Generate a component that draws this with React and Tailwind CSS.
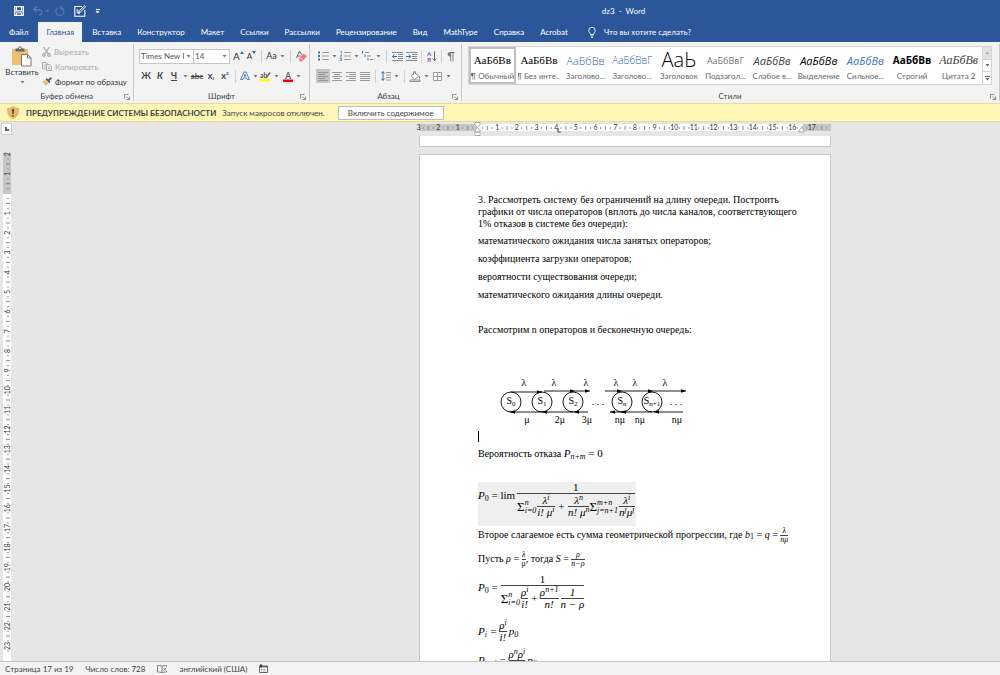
import React from "react";

const tabs = [
  "Файл",
  "Главная",
  "Вставка",
  "Конструктор",
  "Макет",
  "Ссылки",
  "Рассылки",
  "Рецензирование",
  "Вид",
  "MathType",
  "Справка",
  "Acrobat",
];

const styles = [
  { name: "¶ Обычный", sample: "АаБбВв", look: "font-['Liberation_Serif',serif] text-[11px] text-black", active: true },
  { name: "¶ Без инте...", sample: "АаБбВв", look: "font-['Liberation_Serif',serif] text-[11px] text-black" },
  { name: "Заголово...", sample: "АаБбВв", look: "font-['Open_Sans',sans-serif] text-[11px] font-light text-[#2f5fb3]" },
  { name: "Заголово...", sample: "АаБбВвГ", look: "font-['Open_Sans',sans-serif] text-[10px] font-light text-[#2f5fb3]" },
  { name: "Заголовок", sample: "АаЬ", look: "font-['Open_Sans',sans-serif] text-[20px] font-light text-black" },
  { name: "Подзагол...", sample: "АаБбВвГ", look: "font-['Open_Sans',sans-serif] text-[9px] text-[#777]" },
  { name: "Слабое в...", sample: "АаБбВв", look: "font-['Open_Sans',sans-serif] text-[11px] italic text-[#444]" },
  { name: "Выделение", sample: "АаБбВв", look: "font-['Open_Sans',sans-serif] text-[11px] italic text-black" },
  { name: "Сильное...", sample: "АаБбВв", look: "font-['Open_Sans',sans-serif] text-[11px] italic text-[#4472c4]" },
  { name: "Строгий", sample: "АаБбВв", look: "font-['Open_Sans',sans-serif] text-[10px] font-bold text-black" },
  { name: "Цитата 2", sample: "АаБбВв", look: "font-['Liberation_Serif',serif] text-[12px] italic text-[#444]" },
];

const CM = 19.67;

function Caret({ className = "" }) {
  return (
    <svg viewBox="0 0 5 3" className={`h-[3px] w-[5px] shrink-0 ${className}`} aria-hidden="true">
      <path d="M.5 0h4l-2 2.500z" fill="currentColor" />
    </svg>
  );
}

function Tool({ label, children, className = "w-[14px]" }) {
  return (
    <button type="button" aria-label={label} className={`flex h-[14px] shrink-0 items-center justify-center ${className}`}>
      {children}
    </button>
  );
}

function Drop({ label }) {
  return (
    <button type="button" aria-label={label} className="flex h-[14px] w-[9px] shrink-0 items-center justify-center text-[#777]">
      <Caret />
    </button>
  );
}

function Divider() {
  return <span className="mx-[3px] h-[13px] w-px shrink-0 bg-[#d0d0d0]" />;
}

function Group({ title, launcher, className, children }) {
  return (
    <section className={`relative flex flex-col border-r border-[#c8c8c8] ${className}`}>
      <div className="h-[47px]">{children}</div>
      <h2 className="text-center leading-[10px] text-[#444]">{title}</h2>
      <button type="button" aria-label={launcher} className="absolute right-[3px] bottom-[1px]">
        <svg viewBox="0 0 6 6" className="size-[6px]" fill="none" stroke="#777">
          <path d="M.5 4.5v-4h4M2.5 2.5l3 3M5.5 2.5v3h-3" strokeWidth=".8" />
        </svg>
      </button>
    </section>
  );
}

function TitleBar() {
  return (
    <header className="flex h-[22px] items-center text-white">
      <div className="flex w-[247px] items-center pl-[14px]">
        <button type="button" aria-label="Сохранить">
          <svg viewBox="0 0 10 10" className="size-[10px]" fill="none" stroke="white">
            <path d="M.7.7h8.6v8.6H.7zM.7 4.9h8.6" strokeWidth="1.3" />
            <path d="M2.5 9.3V6.8h5v2.5M2.5.7v4M7.5.7v4" />
          </svg>
        </button>
        <button type="button" aria-label="Отменить" className="ml-[9px] flex items-center gap-[2px] text-[#5577b0]">
          <svg viewBox="0 0 10 10" className="size-[10px]" fill="none" stroke="currentColor">
            <path d="M3.7.8.8 3.6l2.9 2.8M1 3.6h4.8c4 0 4 4.7.4 5.5" strokeWidth="1.4" />
          </svg>
          <Caret />
        </button>
        <button type="button" aria-label="Повторить" className="ml-[5px] text-[#5577b0]">
          <svg viewBox="0 0 10 10" className="size-[10px]" fill="none" stroke="currentColor">
            <path d="M3.4 1.8a4 4 0 1 0 3.400.2M6.200.2v3h3" strokeWidth="1.3" />
          </svg>
        </button>
        <button type="button" aria-label="Рукописный ввод" className="ml-[9px]">
          <svg viewBox="0 0 12 12" className="size-[12px]" fill="none" stroke="white">
            <path d="M8 1.5H.8v9.7h10V5" strokeWidth="1.1" />
            <path d="m4.3 7.8 1-2L10.5.7l1.2 1.1-5.3 5.2zM2.5 5.5c1-2 2-.5 1 1S4 9 6 8" />
          </svg>
        </button>
        <button type="button" aria-label="Настройка панели" className="ml-[9px] flex flex-col items-center gap-px">
          <span className="h-px w-[4px] bg-white" />
          <Caret />
        </button>
      </div>
      <h1 className="flex-1 text-center">dz3 &nbsp;-&nbsp; Word</h1>
    </header>
  );
}

function Tabs() {
  return (
    <nav className="flex h-[20px] items-stretch pl-[1px] text-white">
      {tabs.map((tab) => (
        <button
          key={tab}
          type="button"
          className={
            tab === "Главная"
              ? "mx-[2px] bg-[#f3f3f3] px-[8px] whitespace-nowrap text-[#2b579a]"
              : "px-[8px] whitespace-nowrap"
          }
        >
          {tab}
        </button>
      ))}
      <button type="button" className="ml-[12px] flex items-center gap-2 whitespace-nowrap">
        <svg viewBox="0 0 8 11" className="h-[11px] w-[8px]" fill="none" stroke="white" strokeWidth=".9">
          <path d="M2.5 7.5C2.500 6 .7 5.500.7 3.600a3.300 3.300 0 0 1 6.600 0C7.300 5.500 5.500 6 5.500 7.500zM2.500 9h3M3 10.400h2" />
        </svg>
        Что вы хотите сделать?
      </button>
    </nav>
  );
}

function Clipboard() {
  return (
    <Group title="Буфер обмена" launcher="Параметры буфера обмена" className="w-[134px] shrink-0">
      <div className="flex">
        <button type="button" className="flex w-[42px] flex-col items-center pl-[2px]">
          <svg viewBox="0 0 20 21" className="mt-[2px] h-[21px] w-[20px]">
            <path d="M0 3h16v16H0z" fill="#eebf72" />
            <path d="M3.500 2.500h2.500C6.500-.5 9.500-.5 10 2.500h2.500v3h-9z" fill="#666" />
            <circle cx="8" cy="2.300" r="1" fill="#f3f3f3" />
            <path d="M9.500 8.500h6l3.500 3.500v8H9.500z" fill="#fff" stroke="#777" />
            <path d="M15.500 8.500V12H19" fill="none" stroke="#777" />
          </svg>
          <span className="leading-[11px]">Вставить</span>
          <Caret className="mt-[3px] text-[#777]" />
        </button>
        <div className="flex flex-col items-start">
          <button type="button" disabled className="flex h-[15px] items-center gap-[3px] text-[#aaa]">
            <svg viewBox="0 0 9 10" className="h-[10px] w-[9px]" fill="none" stroke="currentColor" strokeWidth="1.200">
              <path d="M1.500 0 6.300 6.800M7.500 0 2.700 6.800" />
              <circle cx="1.900" cy="8" r="1.300" />
              <circle cx="7.100" cy="8" r="1.300" />
            </svg>
            Вырезать
          </button>
          <button type="button" disabled className="flex h-[15px] items-center gap-[3px] text-[#aaa]">
            <svg viewBox="0 0 10 9" className="h-[9px] w-[10px]" fill="#f3f3f3" stroke="currentColor">
              <path d="M.5.5H4L6 2.500V7H.5zM2 3h2M2 5h2" />
              <path d="M4.500 2.500h3l2 2v4h-5zM6 5h2M6 6.800h2" />
            </svg>
            Копировать
          </button>
          <button type="button" className="flex h-[15px] items-center gap-[3px] whitespace-nowrap">
            <svg viewBox="0 0 10 9" className="h-[9px] w-[10px]">
              <path d="M0 4.500 3.500 3l3 3L4 9z" fill="#eebf72" />
              <path d="m3.500 2.200 1.200-1 1.500 1.300L8.600 0 10 1.400 7.500 3.800l.8 1.500-1 1z" fill="#555" />
            </svg>
            Формат по образцу
          </button>
        </div>
      </div>
    </Group>
  );
}

function FontGroup() {
  return (
    <Group title="Шрифт" launcher="Параметры шрифта" className="w-[176px] shrink-0">
      <div className="mt-[5px] flex h-[14px] items-center pl-[5px]">
        <div className="flex h-[15px] w-[55px] items-center border border-[#c6c6c6] bg-white text-[#555]">
          <input aria-label="Шрифт" defaultValue="Times New R" className="min-w-0 flex-1 pl-px outline-none" />
          <Drop label="Список шрифтов" />
        </div>
        <div className="-ml-px flex h-[15px] w-[37px] items-center border border-[#c6c6c6] bg-white text-[#555]">
          <input aria-label="Размер шрифта" defaultValue="14" className="min-w-0 flex-1 pl-px outline-none" />
          <Drop label="Список размеров" />
        </div>
        <Tool label="Увеличить размер" className="ml-[2px] w-[13px]">
          <span className="text-[10px]">A</span>
          <svg viewBox="0 0 4 3" className="mb-[7px] h-[3px] w-[4px]"><path d="M0 3h4L2 0z" fill="#2b6fb5" /></svg>
        </Tool>
        <Tool label="Уменьшить размер" className="w-[13px]">
          <span className="text-[8px]">A</span>
          <svg viewBox="0 0 4 3" className="mb-[7px] h-[3px] w-[4px]"><path d="M0 0h4L2 3z" fill="#2b6fb5" /></svg>
        </Tool>
        <Divider />
        <Tool label="Регистр" className="w-[13px]"><span className="text-[9px]">Aa</span></Tool>
        <Drop label="Варианты регистра" />
        <Divider />
        <Tool label="Очистить форматирование">
          <svg viewBox="0 0 11 11" className="size-[11px]">
            <path d="M.5 7 3 .8h1.200L5.500 4M1.500 5h3" fill="none" stroke="#555" strokeWidth=".9" />
            <path d="m2.500 8 5-5.500L11 5.200 6 10.500H4z" fill="#e8798c" />
            <path d="m3.700 6.600 3.600 2.700" stroke="#fff" strokeWidth=".7" />
          </svg>
        </Tool>
      </div>
      <div className="mt-[6px] flex h-[14px] items-center pl-[5px] text-[#444]">
        <Tool label="Полужирный"><b className="text-[9px]">Ж</b></Tool>
        <Tool label="Курсив"><b className="text-[9px] italic">К</b></Tool>
        <Tool label="Подчеркнутый"><b className="text-[9px] underline">Ч</b></Tool>
        <Drop label="Варианты подчеркивания" />
        <Tool label="Зачеркнутый"><b className="text-[8px] font-semibold line-through">abc</b></Tool>
        <Tool label="Подстрочный"><b className="text-[9px]">x<span className="text-[6px] text-[#2b6fb5]">₂</span></b></Tool>
        <Tool label="Надстрочный"><b className="text-[9px]">x<span className="text-[8px] text-[#2b6fb5]">²</span></b></Tool>
        <Divider />
        <Tool label="Текстовые эффекты" className="w-[12px]">
          <svg viewBox="0 0 10 10" className="size-[10px]" fill="none" stroke="#3d76b8" strokeWidth=".9">
            <path d="M.6 8.500 4 1h2l3.400 7.500H7.200L6.500 7h-3l-.7 1.500zM4.200 5.200h1.600L5 3.300z" />
          </svg>
        </Tool>
        <Drop label="Варианты эффектов" />
        <Tool label="Цвет выделения" className="w-[12px]">
          <svg viewBox="0 0 12 11" className="h-[11px] w-[12px]">
            <text x="0" y="6.500" fontSize="7" fontWeight="700" fill="#555">ab</text>
            <path d="m5 7 4.500-6 1.500 1-4.300 5.500z" fill="#777" />
            <path d="M.500 8h10v2.500H.500z" fill="#ffff00" />
          </svg>
        </Tool>
        <Drop label="Цвета выделения" />
        <Tool label="Цвет текста" className="w-[13px]">
          <svg viewBox="0 0 10 11" className="h-[11px] w-[10px]">
            <text x="2" y="7.500" fontSize="9" fontWeight="600" fill="#555">A</text>
            <path d="M0 8.500h10V11H0z" fill="#f00" />
          </svg>
        </Tool>
        <Drop label="Цвета текста" />
      </div>
    </Group>
  );
}

function ListIcon({ kind }) {
  return (
    <svg viewBox="0 0 11 10" className="h-[10px] w-[11px]">
      {kind === "bullets" ? <path d="M0 .5h2v2H0zM0 4h2v2H0zM0 7.500h2v2H0z" fill="#2b6fb5" /> : null}
      {kind === "numbers" ? (
        <path d="M.5.5h1v2M0 4h1.500v1L.3 6h1.500M0 7.500h1.500v2H0" fill="none" stroke="#2b6fb5" strokeWidth=".7" />
      ) : null}
      {kind === "levels" ? (
        <>
          <path d="M.5 0v2.500M3 3.500V6M6 7v2.500" stroke="#2b6fb5" />
          <path d="M3 1.500h4M5 5h4M8 8.500h3" stroke="#888" />
        </>
      ) : (
        <path d="M4 1.500h7M4 5h7M4 8.500h7" stroke="#999" />
      )}
    </svg>
  );
}

function IndentIcon({ right }) {
  return (
    <svg viewBox="0 0 11 9" className="h-[9px] w-[11px]" fill="none" stroke="#888">
      <path d="M0 .5h11M6 2.500h5M6 4.500h5M6 6.500h5M0 8.500h11" />
      <path d={right ? "M0 4.500h4.500M2.700 2.500l2 2-2 2" : "M.5 4.500H5M2.500 2.500l-2 2 2 2"} stroke="#2b6fb5" />
    </svg>
  );
}

function AlignIcon({ d }) {
  return (
    <svg viewBox="0 0 10 9" className="h-[9px] w-[10px]" stroke="#999">
      <path d={d} />
    </svg>
  );
}

function ParagraphGroup() {
  return (
    <Group title="Абзац" launcher="Параметры абзаца" className="w-[152px] shrink-0 pl-[6px]">
      <div className="mt-[5px] flex h-[14px] items-center">
        <Tool label="Маркеры"><ListIcon kind="bullets" /></Tool>
        <Drop label="Библиотека маркеров" />
        <Tool label="Нумерация" className="w-[13px]"><ListIcon kind="numbers" /></Tool>
        <Drop label="Библиотека нумерации" />
        <Tool label="Многоуровневый список" className="w-[13px]"><ListIcon kind="levels" /></Tool>
        <Drop label="Библиотека списков" />
        <Divider />
        <Tool label="Уменьшить отступ"><IndentIcon /></Tool>
        <Tool label="Увеличить отступ"><IndentIcon right /></Tool>
        <Divider />
        <Tool label="Сортировка" className="w-[13px]">
          <svg viewBox="0 0 10 11" className="h-[11px] w-[10px]">
            <text x="0" y="5.200" fontSize="6" fontWeight="700" fill="#2b6fb5">A</text>
            <text x="0" y="10.600" fontSize="6" fontWeight="700" fill="#8b4bb0">Я</text>
            <path d="M7.500.5v9M5.500 7.500l2 2.200 2-2.200" fill="none" stroke="#666" />
          </svg>
        </Tool>
        <Divider />
        <Tool label="Знаки абзаца" className="w-[12px]"><span className="text-[11px] text-[#777]">¶</span></Tool>
      </div>
      <div className="mt-[6px] flex h-[14px] items-center">
        <Tool label="По левому краю" className="w-[14px] bg-[#c5c5c5]"><AlignIcon d="M0 .5h10M0 2.500h7M0 4.500h10M0 6.500h7M0 8.500h10" /></Tool>
        <Tool label="По центру"><AlignIcon d="M0 .5h10M2 2.500h6M0 4.500h10M2 6.500h6M0 8.500h10" /></Tool>
        <Tool label="По правому краю"><AlignIcon d="M0 .5h10M3 2.500h7M0 4.500h10M3 6.500h7M0 8.500h10" /></Tool>
        <Tool label="По ширине"><AlignIcon d="M0 .5h10M0 2.500h10M0 4.500h10M0 6.500h10M0 8.500h10" /></Tool>
        <Divider />
        <Tool label="Интервал" className="w-[13px]">
          <svg viewBox="0 0 10 10" className="size-[10px]" fill="none">
            <path d="M2 .7v8.600M.3 2.500 2 .7l1.700 1.800M.3 7.500 2 9.300l1.700-1.800" stroke="#2b6fb5" />
            <path d="M5 1.500h5M5 4h5M5 6.500h5M5 9h5" stroke="#999" />
          </svg>
        </Tool>
        <Drop label="Варианты интервала" />
        <Divider />
        <Tool label="Заливка">
          <svg viewBox="0 0 12 11" className="h-[11px] w-[12px]" fill="#fff" stroke="#777" strokeWidth=".8">
            <path d="m2 4.500 4-3 3.500 4-4 3z" />
            <path d="M4.500 4V1C4.500 0 6.500 0 6.500 1v2" fill="none" />
            <path d="M9.500 4.500c2 1 2 3 1 3.500z" fill="#2b6fb5" stroke="none" />
            <path d="M1 9h10v1.500H1z" />
          </svg>
        </Tool>
        <Drop label="Цвета заливки" />
        <Tool label="Границы" className="w-[13px]">
          <svg viewBox="0 0 9 9" className="size-[9px]" fill="#fff" stroke="#999">
            <path d="M.5.5h8v8h-8zM4.500.5v8M.5 4.500h8" />
          </svg>
        </Tool>
        <Drop label="Варианты границ" />
      </div>
    </Group>
  );
}

function StylesGroup() {
  return (
    <Group title="Стили" launcher="Окно стилей" className="min-w-0 flex-1 pr-[7px] pl-[6px]">
      <div className="mt-[2px] flex h-[39px] border border-[#d5d5d5] bg-white">
        <div className="grid min-w-0 flex-1 grid-cols-11">
          {styles.map((style, index) => (
            <button
              key={index}
              type="button"
              className={`flex min-w-0 flex-col items-center overflow-hidden border-2 ${style.active ? "border-[#c0c0c0]" : "border-transparent"}`}
            >
              <span className={`flex h-[22px] max-w-[40px] items-center justify-start leading-none whitespace-nowrap ${style.look}`}>
                {style.sample}
              </span>
              <span className="leading-[11px] whitespace-nowrap text-[#666]">{style.name}</span>
            </button>
          ))}
        </div>
        <div className="flex w-[9px] flex-col divide-y divide-[#d5d5d5] border-l border-[#d5d5d5] text-[#666]">
          <button type="button" aria-label="Вверх" className="flex flex-1 items-center justify-center bg-[#e1e1e1] text-[#aaa]">
            <Caret className="rotate-180" />
          </button>
          <button type="button" aria-label="Вниз" className="flex flex-1 items-center justify-center">
            <Caret />
          </button>
          <button type="button" aria-label="Все стили" className="flex flex-1 flex-col items-center justify-center gap-px">
            <span className="h-px w-[5px] bg-[#666]" />
            <Caret />
          </button>
        </div>
      </div>
    </Group>
  );
}

function SecurityBar() {
  return (
    <div className="flex h-[19px] shrink-0 items-center border-y border-[#e6dd9a] bg-[#fcf7b6] pl-[7px] text-[#444]">
      <svg viewBox="0 0 12 13" className="h-[13px] w-[12px]">
        <path d="M6 0c2 1.500 4 2 6 2 0 5-1 9-6 11C1 11 0 7 0 2c2 0 4-.5 6-2z" fill="#e8b465" />
        <path d="M5 3h2l-.4 5H5.400zM5.200 9h1.600v1.600H5.200z" fill="#444" />
      </svg>
      <strong className="ml-[7px] whitespace-nowrap">ПРЕДУПРЕЖДЕНИЕ СИСТЕМЫ БЕЗОПАСНОСТИ</strong>
      <span className="ml-[6px] whitespace-nowrap">Запуск макросов отключен.</span>
      <button type="button" className="ml-[13px] h-[14px] w-[106px] border border-[#bdbdbd] bg-[#fdfdfd] leading-[12px] whitespace-nowrap">
        Включить содержимое
      </button>
    </div>
  );
}

function rulerMarks(from, to) {
  const marks = [];
  for (let q = from * 4; q <= to * 4; q++) {
    marks.push({ at: (q / 4) * CM, kind: q % 4 === 0 ? "number" : q % 2 === 0 ? "half" : "dot", value: Math.abs(q / 4) });
  }
  return marks;
}

function HorizontalRuler() {
  return (
    <svg viewBox="0 0 412 14" className="h-[14px] w-full overflow-visible" aria-hidden="true">
      <path d="M0 2h412v7H0z" fill="#c6c6c6" />
      <path d="M58 2h326v7H58z" fill="#fff" />
      {rulerMarks(-3, 17.75).map((mark) => {
        const x = 58.5 + mark.at;
        if (mark.kind === "number") {
          return mark.value === 0 ? null : (
            <text key={x} x={x} y="8" fontSize="7" textAnchor="middle" fill="#333">
              {mark.value}
            </text>
          );
        }
        return mark.kind === "half" ? (
          <path key={x} d={`M${x} 4v4`} stroke="#888" />
        ) : (
          <path key={x} d={`M${x} 5v2`} stroke="#999" />
        );
      })}
      <path d="M56 .5h5v2.500L58.500 5.500 56 3zM56 10V8l2.500-2.500L61 8v2zM56 10h5v3.500h-5z" fill="#fff" stroke="#999" strokeWidth=".8" />
      <path d="M380 10V8l2.500-2.500L385 8v2z" fill="#fff" stroke="#999" strokeWidth=".8" />
      <path d="M139 6v4h3" fill="none" stroke="#555" strokeWidth="1.200" />
    </svg>
  );
}

function VerticalRuler() {
  return (
    <svg viewBox="0 0 13 540" className="h-[540px] w-[13px] shrink-0" aria-hidden="true">
      <path d="M3 17h8v41H3z" fill="#c6c6c6" />
      <path d="M3 58h8v482H3z" fill="#fff" />
      {rulerMarks(-2, 23.25).map((mark) => {
        const y = 57.5 + mark.at;
        if (mark.kind === "number") {
          return mark.value === 0 ? null : (
            <text key={y} transform={`translate(10 ${y}) rotate(-90)`} fontSize="7" textAnchor="middle" fill="#333">
              {mark.value}
            </text>
          );
        }
        return mark.kind === "half" ? (
          <path key={y} d={`M6 ${y}h4`} stroke="#888" />
        ) : (
          <path key={y} d={`M7 ${y}h2`} stroke="#999" />
        );
      })}
    </svg>
  );
}

function Arrow({ from, to, y }) {
  const dir = to > from ? -1 : 1;
  return (
    <g>
      <path d={`M${from} ${y}H${to}`} stroke="black" strokeWidth=".9" />
      <path d={`M${to} ${y}l${dir * 5} -1.800v3.600z`} fill="black" />
    </g>
  );
}

function QueueDiagram() {
  const nodes = [
    [13, "S", "0"],
    [44, "S", "1"],
    [75, "S", "2"],
    [124, "S", "n"],
    [154, "S", "n+1"],
  ];
  const rates = [[29, "μ"], [62, "2μ"], [89, "3μ"], [122, "nμ"], [142, "nμ"], [179, "nμ"]];

  return (
    <svg viewBox="0 0 200 54" className="ml-[20px] h-[54px] w-[200px]" fontSize="10" textAnchor="middle" role="img" aria-label="Граф состояний">
      {[26, 56, 88, 118, 137, 167].map((x) => (
        <text key={x} x={x} y="12">λ</text>
      ))}
      {nodes.map(([x, name, index]) => (
        <g key={x}>
          <circle cx={x} cy="28" r="10" fill="none" stroke="black" strokeWidth=".9" />
          <text x={x} y="30">
            {name}
            <tspan fontSize="7" dy="2">{index}</tspan>
          </text>
        </g>
      ))}
      <Arrow from={13} to={44} y={18} />
      <Arrow from={46} to={77} y={17} />
      <Arrow from={77} to={92} y={17} />
      <Arrow from={107} to={124} y={17} />
      <Arrow from={124} to={155} y={17} />
      <Arrow from={155} to={188} y={17} />
      <Arrow from={44} to={12} y={38} />
      <Arrow from={75} to={44} y={38} />
      <Arrow from={90} to={76} y={38} />
      <Arrow from={126} to={112} y={38} />
      <Arrow from={154} to={123} y={38} />
      <Arrow from={185} to={156} y={38} />
      <text x="100" y="31">. . .</text>
      <text x="178" y="31">. . .</text>
      {rates.map(([x, text]) => (
        <text key={x} x={x} y="49">{text}</text>
      ))}
    </svg>
  );
}

function Sub({ children }) {
  return <sub className="text-[8px]">{children}</sub>;
}

function Sup({ children }) {
  return <sup className="text-[8px]">{children}</sup>;
}

function Frac({ top, bottom, small, className = "" }) {
  return (
    <span className={`inline-flex shrink-0 flex-col items-center align-middle ${small ? "text-[8px] leading-[8px]" : "leading-[11px]"} ${className}`}>
      <span className="self-stretch border-b border-[#444] text-center">{top}</span>
      <span>{bottom}</span>
    </span>
  );
}

function Sum({ from, to }) {
  return (
    <span className="flex items-center">
      <span className="text-[13px] not-italic">Σ</span>
      <span className="mr-[1px] flex flex-col text-[8px] leading-[8px]">
        <span>{to}</span>
        <span>{from}</span>
      </span>
    </span>
  );
}

function Document() {
  return (
    <article className="border border-b-0 border-[#c8c8c8] bg-white px-[58px] pt-[39px] font-['Liberation_Serif','Times_New_Roman',serif] text-[10px] leading-[12px] text-black">
      <p className="whitespace-nowrap">
        3. Рассмотреть систему без ограничений на длину очереди. Построить
        <br />
        графики от числа операторов (вплоть до числа каналов, соответствующего
        <br />
        1% отказов в системе без очереди):
      </p>
      <div className="mt-[5px] flex flex-col gap-[6px]">
        <p>математического ожидания числа занятых операторов;</p>
        <p>коэффициента загрузки операторов;</p>
        <p>вероятности существования очереди;</p>
        <p>математического ожидания длины очереди.</p>
      </div>
      <p className="mt-[23px]">Рассмотрим n операторов и бесконечную очередь:</p>
      <div className="mt-[38px]">
        <QueueDiagram />
      </div>
      <div className="mt-[3px] h-[11px] w-px bg-black" />
      <p className="mt-[5px] whitespace-nowrap">
        Вероятность отказа <span className="text-[11px]"><i>P<Sub>n+m</Sub></i> = 0</span>
      </p>

      <div className="mt-[22px] flex h-[44px] w-fit items-start bg-[#efefef] pr-[1px] text-[11px] whitespace-nowrap">
        <span className="mt-[7px] mr-[2px]"><i>P</i><Sub>0</Sub> = lim</span>
        <Frac
          top="1"
          bottom={
            <span className="mt-[1px] flex items-center italic">
              <Sum to="n" from="i=0" />
              <Frac top={<>λ<Sup>i</Sup></>} bottom={<>i! μ<Sup>i</Sup></>} />
              <span className="mx-[3px]">+</span>
              <Frac top={<>λ<Sup>n</Sup></>} bottom={<>n! μ<Sup>n</Sup></>} />
              <Sum to="m+n" from="j=n+1" />
              <Frac top={<>λ<Sup>i</Sup></>} bottom={<>n<Sup>j</Sup>μ<Sup>j</Sup></>} />
            </span>
          }
        />
      </div>

      <p className="flex h-[18px] items-center whitespace-pre">
        Второе слагаемое есть сумма геометрической прогрессии, где <i>b</i><Sub>1</Sub> = <i>q</i> = <Frac small top={<i>λ</i>} bottom={<i>nμ</i>} />
      </p>
      <p className="mt-[6px] flex h-[18px] items-center whitespace-pre">
        Пусть <i>ρ</i> = <Frac small top={<i>λ</i>} bottom="μ" />, тогда <i>S</i> = <Frac small top={<i>ρ</i>} bottom={<i>n−ρ</i>} />
      </p>

      <div className="mt-[6px] flex h-[42px] items-start text-[11px] whitespace-nowrap">
        <span className="mt-[7px] mr-[3px]"><i>P</i><Sub>0</Sub> =</span>
        <Frac
          top="1"
          bottom={
            <span className="mt-[1px] flex items-center italic">
              <Sum to="n" from="i=0" />
              <Frac top={<>ρ<Sup>i</Sup></>} bottom="i!" />
              <span className="mx-[2px]">+</span>
              <Frac top={<>ρ<Sup>n+1</Sup></>} bottom="n!" />
              <Frac className="ml-[2px]" top="1" bottom="n − ρ" />
            </span>
          }
        />
      </div>
      <div className="flex h-[30px] items-center gap-[2px] text-[11px] italic whitespace-nowrap">
        <span>P<Sub>i</Sub> =</span>
        <Frac top={<>ρ<Sup>i</Sup></>} bottom="i!" />
        <span>p<Sub>0</Sub></span>
      </div>
      <div className="flex h-[28px] items-center gap-[2px] text-[11px] italic whitespace-nowrap">
        <span>P<Sub>n+i</Sub> =</span>
        <Frac top={<>ρ<Sup>n</Sup>ρ<Sup>i</Sup></>} bottom="n!" />
        <span>p<Sub>0</Sub></span>
      </div>
    </article>
  );
}

function StatusBar() {
  return (
    <footer className="flex h-[14px] shrink-0 items-center border-t border-[#c6c6c6] bg-[#f3f3f3] pl-[5px] text-[#444]">
      <span>Страница 17 из 19</span>
      <span className="ml-[12px]">Число слов: 728</span>
      <svg viewBox="0 0 10 8" className="ml-[12px] h-[8px] w-[10px]" fill="none" stroke="#666" strokeWidth=".8">
        <path d="M5 1.500C4 .5 2 .5.500.5v6.500c1.500 0 3.500 0 4.500 1zM5 1.500C6 .5 8 .5 9.500.5V2M5 8c1-1 3-1 4.500-1V6M6.500 3l2.500 2.500M9 3 6.500 5.500" />
      </svg>
      <span className="ml-[12px]">английский (США)</span>
      <svg viewBox="0 0 9 9" className="ml-[12px] size-[9px]">
        <path d="M.5 2.500h8v6h-8z" fill="#fff" stroke="#666" />
        <path d="M3.500 1.500h5.500v2H3.500z" fill="#666" />
        <circle cx="2" cy="2" r="1.700" fill="#444" />
        <path d="M2 5.500h5M2 7h5" stroke="#777" strokeWidth=".8" strokeDasharray="1 .6" />
      </svg>
    </footer>
  );
}

const App = () => {
  return (
    <div className="flex h-screen flex-col overflow-hidden bg-[#e6e6e6] font-[Lato,'Noto_Sans',sans-serif] text-[8px] text-[#333]">
      <div className="shrink-0 bg-[#2b579a]">
        <TitleBar />
        <Tabs />
      </div>
      <div className="flex h-[61px] shrink-0 bg-[#f3f3f3] pt-[2px] pb-[2px]">
        <Clipboard />
        <FontGroup />
        <ParagraphGroup />
        <StylesGroup />
      </div>
      <SecurityBar />
      <div className="flex h-[14px] shrink-0">
        <button type="button" aria-label="Тип табуляции" className="m-[1px] flex w-[11px] items-center justify-center border border-[#d0d0d0] bg-white">
          <span className="size-[4px] border-b-2 border-l-2 border-[#666]" />
        </button>
        <div className="grid flex-1 grid-cols-[406fr_412px_169fr]">
          <div className="col-start-2">
            <HorizontalRuler />
          </div>
        </div>
      </div>
      <main className="flex min-h-0 flex-1 overflow-hidden">
        <VerticalRuler />
        <div className="grid flex-1 grid-cols-[406fr_412px_169fr]">
          <div className="col-start-2">
            <div className="mb-[7px] h-[11px] border border-t-0 border-[#c8c8c8] bg-white" />
            <Document />
          </div>
        </div>
      </main>
      <StatusBar />
    </div>
  );
};

export default App;
